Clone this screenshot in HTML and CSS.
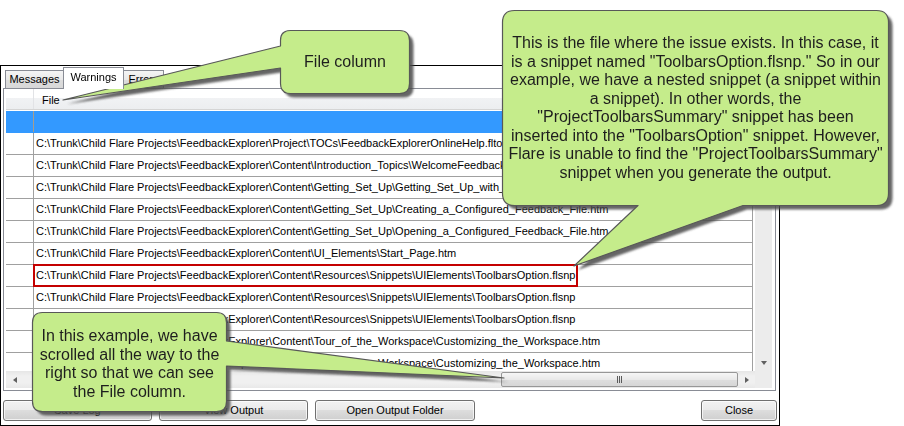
FILE: index.html
```html
<!DOCTYPE html>
<html>
<head>
<meta charset="utf-8">
<title>Warnings</title>
<link rel="stylesheet" href="styles.css">
</head>
<body>
<div class="page">
  <div class="window">
    <div class="tabs">
      <div class="tab">Messages</div>
      <div class="tab active">Warnings</div>
      <div class="tab">Errors</div>
    </div>
    <div class="panel">
      <div class="list">
        <div class="list-main">
          <div class="viewport">
            <div class="header"><div class="hcell c0"></div><div class="hcell c1">File</div></div>
            <div class="rows">
              <div class="row selected"><div class="cell c0"></div><div class="cell c1"></div></div>
              <div class="row"><div class="cell c0"></div><div class="cell c1">C:\Trunk\Child Flare Projects\FeedbackExplorer\Project\TOCs\FeedbackExplorerOnlineHelp.fltoc</div></div>
              <div class="row"><div class="cell c0"></div><div class="cell c1">C:\Trunk\Child Flare Projects\FeedbackExplorer\Content\Introduction_Topics\WelcomeFeedbackExplorer.htm</div></div>
              <div class="row"><div class="cell c0"></div><div class="cell c1">C:\Trunk\Child Flare Projects\FeedbackExplorer\Content\Getting_Set_Up\Getting_Set_Up_with_Feedback.htm</div></div>
              <div class="row"><div class="cell c0"></div><div class="cell c1">C:\Trunk\Child Flare Projects\FeedbackExplorer\Content\Getting_Set_Up\Creating_a_Configured_Feedback_File.htm</div></div>
              <div class="row"><div class="cell c0"></div><div class="cell c1">C:\Trunk\Child Flare Projects\FeedbackExplorer\Content\Getting_Set_Up\Opening_a_Configured_Feedback_File.htm</div></div>
              <div class="row"><div class="cell c0"></div><div class="cell c1">C:\Trunk\Child Flare Projects\FeedbackExplorer\Content\UI_Elements\Start_Page.htm</div></div>
              <div class="row"><div class="cell c0"></div><div class="cell c1">C:\Trunk\Child Flare Projects\FeedbackExplorer\Content\Resources\Snippets\UIElements\ToolbarsOption.flsnp</div><div class="hl"></div></div>
              <div class="row"><div class="cell c0"></div><div class="cell c1">C:\Trunk\Child Flare Projects\FeedbackExplorer\Content\Resources\Snippets\UIElements\ToolbarsOption.flsnp</div></div>
              <div class="row"><div class="cell c0"></div><div class="cell c1">C:\Trunk\Child Flare Projects\FeedbackExplorer\Content\Resources\Snippets\UIElements\ToolbarsOption.flsnp</div></div>
              <div class="row"><div class="cell c0"></div><div class="cell c1">C:\Trunk\Child Flare Projects\FeedbackExplorer\Content\Tour_of_the_Workspace\Customizing_the_Workspace.htm</div></div>
              <div class="row"><div class="cell c0"></div><div class="cell c1">C:\Trunk\Child Flare Projects\FeedbackExplorer\Content\Tour_of_the_Workspace\Customizing_the_Workspace.htm</div></div>
            </div>
          </div>
          <div class="vscroll"><div class="sbtn"><span class="arrow down"></span></div></div>
        </div>
        <div class="list-bottom">
          <div class="hscroll">
            <div class="sbtn"><span class="arrow left"></span></div>
            <div class="track"><div class="thumb"><span class="grip"></span></div></div>
            <div class="sbtn"><span class="arrow right"></span></div>
          </div>
          <div class="corner"></div>
        </div>
      </div>
    </div>
    <div class="buttons">
      <div class="btn b1">Save Log</div>
      <div class="btn b2">View Output</div>
      <div class="btn b3">Open Output Folder</div>
      <div class="btn close">Close</div>
    </div>
  </div>

  <svg class="overlay" width="904" height="426" viewBox="0 0 904 426">
    <defs>
      <filter id="soft" x="-10%" y="-10%" width="120%" height="120%"><feGaussianBlur stdDeviation="1.2"/></filter>
    </defs>
    <g class="shadow" transform="translate(4 4)" filter="url(#soft)">
      <path d="M290.5,30.5 H399.5 Q409.5,30.5 409.5,40.5 V83.5 Q409.5,93.5 399.5,93.5 H290.5 Q280.5,93.5 280.5,83.5 V68 L63,100 L280.5,46 V40.5 Q280.5,30.5 290.5,30.5 Z"/>
      <path d="M514.5,10.5 H876.5 Q888.5,10.5 888.5,22.5 V193.5 Q888.5,205.5 876.5,205.5 H743 L574,266 L638,205.5 H514.5 Q502.5,205.5 502.5,193.5 V22.5 Q502.5,10.5 514.5,10.5 Z"/>
      <path d="M42.5,312.5 H216.5 Q226.5,312.5 226.5,322.5 V341 L504,378 L226.5,366 V401.5 Q226.5,411.5 216.5,411.5 H42.5 Q32.5,411.5 32.5,401.5 V322.5 Q32.5,312.5 42.5,312.5 Z"/>
    </g>
    <g class="shape">
      <path d="M290.5,30.5 H399.5 Q409.5,30.5 409.5,40.5 V83.5 Q409.5,93.5 399.5,93.5 H290.5 Q280.5,93.5 280.5,83.5 V68 L63,100 L280.5,46 V40.5 Q280.5,30.5 290.5,30.5 Z"/>
      <path d="M514.5,10.5 H876.5 Q888.5,10.5 888.5,22.5 V193.5 Q888.5,205.5 876.5,205.5 H743 L574,266 L638,205.5 H514.5 Q502.5,205.5 502.5,193.5 V22.5 Q502.5,10.5 514.5,10.5 Z"/>
      <path d="M42.5,312.5 H216.5 Q226.5,312.5 226.5,322.5 V341 L504,378 L226.5,366 V401.5 Q226.5,411.5 216.5,411.5 H42.5 Q32.5,411.5 32.5,401.5 V322.5 Q32.5,312.5 42.5,312.5 Z"/>
    </g>
  </svg>

  <div class="ctext ct1">File column</div>
  <div class="ctext ct2">This is the file where the issue exists. In this case, it<br>is a snippet named "ToolbarsOption.flsnp." So in our<br>example, we have a nested snippet (a snippet within<br>a snippet). In other words, the<br>"ProjectToolbarsSummary" snippet has been<br>inserted into the "ToolbarsOption" snippet. However,<br>Flare is unable to find the "ProjectToolbarsSummary"<br>snippet when you generate the output.</div>
  <div class="ctext ct3">In this example, we have<br>scrolled all the way to the<br>right so that we can see<br>the File column.</div>
</div>
</body>
</html>
```
FILE: styles.css
```css
* { box-sizing: border-box; }
html, body { margin: 0; padding: 0; }
body {
  width: 904px;
  height: 426px;
  overflow: hidden;
  background: #fff;
  font-family: "Liberation Sans", Arial, sans-serif;
  color: #000;
}
.page {
  position: relative;
  width: 904px;
  height: 426px;
  padding-top: 65px;
}

/* dialog window */
.window {
  width: 780px;
  height: 361px;
  border: 1px solid #000;
  background: #fff;
  display: flex;
  flex-direction: column;
}

/* tabs */
.tabs {
  display: flex;
  align-items: flex-end;
  height: 22px;
  padding-left: 4px;
  font-size: 11px;
  flex: none;
}
.tab {
  height: 18px;
  border: 1px solid #898c95;
  border-bottom: none;
  background: linear-gradient(#f4f4f4, #e9e9e9 50%, #dcdcdc 51%, #d8d8d8);
  text-align: center;
  line-height: 17px;
  white-space: nowrap;
  overflow: hidden;
}
.tab:nth-child(1) { width: 58px; border-right: none; }
.tab.active {
  width: 61px;
  height: 22px;
  margin-bottom: -1px;
  background: #fff;
  padding-top: 1px;
  position: relative;
  z-index: 1;
}
.tab:nth-child(3) { width: 40px; border-left: none; }

/* panel */
.panel {
  flex: none;
  margin-left: 2px;
  width: 773px;
  height: 303px;
  border: 1px solid #898c95;
  padding-left: 2px;
  background: #fff;
}
.list { display: flex; flex-direction: column; }
.list-main { display: flex; height: 282px; }
.viewport { width: 749px; overflow: hidden; flex: none; }
.header {
  display: flex;
  height: 21px;
  width: 749px;
  border-bottom: 1px solid #d5d5d5;
  background: linear-gradient(#ffffff 0, #ffffff 45%, #f1f2f4 45%, #eceef0 100%);
  font-size: 11px;
}
.hcell.c0 { width: 28px; flex: none; border-right: 1px solid #e2e3e6; }
.hcell.c1 { padding: 3px 0 0 8px; line-height: 16px; }

.rows { padding-top: 1px; }
.row {
  display: flex;
  width: 747px;
  height: 22px;
  border-bottom: 1px solid #a0a0a0;
  position: relative;
}
.cell {
  font-size: 11px;
  line-height: 21px;
  white-space: nowrap;
  overflow: hidden;
}
.cell.c0 { width: 28px; flex: none; border-right: 1px solid #a0a0a0; }
.cell.c1 { flex: 1; border-right: 1px solid #a0a0a0; padding-left: 2px; }
.row.selected { background: #3399ff; border-bottom-color: #3399ff; }
.row.selected .c0 { border-right-color: #a79d8c; }
.row.selected .c1 { border-right-color: #3399ff; }
.hl {
  position: absolute;
  left: 27px;
  top: -1px;
  width: 545px;
  height: 23px;
  border: 2px solid #c40000;
}

/* scrollbars */
.vscroll {
  width: 17px;
  flex: none;
  margin-left: 0;
  background: #ececec;
  display: flex;
  flex-direction: column;
  justify-content: flex-end;
}
.sbtn {
  width: 17px;
  height: 17px;
  flex: none;
  display: flex;
  align-items: center;
  justify-content: center;
}
.arrow { width: 0; height: 0; display: block; }
.arrow.down {
  border-left: 3.5px solid transparent;
  border-right: 3.5px solid transparent;
  border-top: 4px solid #606060;
}
.arrow.left {
  border-top: 3.5px solid transparent;
  border-bottom: 3.5px solid transparent;
  border-right: 4px solid #606060;
}
.arrow.right {
  border-top: 3.5px solid transparent;
  border-bottom: 3.5px solid transparent;
  border-left: 4px solid #606060;
}
.list-bottom { display: flex; height: 17px; }
.hscroll {
  width: 749px;
  flex: none;
  display: flex;
  background: linear-gradient(#e6e6e6, #f0f0f0 30%, #f0f0f0 70%, #e8e8e8);
}
.track {
  flex: 1;
  display: flex;
  justify-content: flex-end;
  align-items: center;
}
.thumb {
  width: 237px;
  height: 15px;
  border: 1px solid #979797;
  border-radius: 2px;
  background: linear-gradient(#f6f6f6, #e9e9e9 50%, #dedede 51%, #d6d6d6);
  display: flex;
  align-items: center;
  justify-content: center;
}
.grip {
  width: 5px;
  height: 7px;
  background: repeating-linear-gradient(90deg, #5a5a5a 0 1px, transparent 1px 2px);
}
.corner { width: 17px; background: #ececec; }

/* buttons */
.buttons {
  display: flex;
  gap: 7px;
  padding: 9px 2px 0 2px;
  font-size: 11px;
}
.btn {
  height: 21px;
  border: 1px solid #707070;
  border-radius: 3px;
  background: linear-gradient(#f2f2f2, #ebebeb 45%, #dddddd 50%, #cfcfcf);
  box-shadow: inset 0 0 0 1px rgba(255,255,255,0.7);
  text-align: center;
  line-height: 19px;
  white-space: nowrap;
}
.b1 { width: 149px; }
.b2 { width: 149px; }
.b3 { width: 160px; }
.close { width: 76px; margin-left: auto; }

/* callouts */
.overlay { position: absolute; left: 0; top: 0; }
.shadow path { fill: #4a4a4a; opacity: 0.85; }
.shape path { fill: #c5ec8b; stroke: #585858; stroke-width: 1.2; stroke-linejoin: round; }
.ctext {
  position: absolute;
  display: flex;
  align-items: center;
  justify-content: center;
  text-align: center;
  font-size: 16px;
  line-height: 18.5px;
  color: #1e1e1e;
  white-space: nowrap;
}
.ct1 { left: 280px; top: 30px; width: 130px; height: 64px; }
.ct2 { left: 502px; top: 10px; width: 387px; height: 196px; }
.ct3 { left: 32px; top: 312px; width: 195px; height: 100px; padding-top: 4px; }
```
